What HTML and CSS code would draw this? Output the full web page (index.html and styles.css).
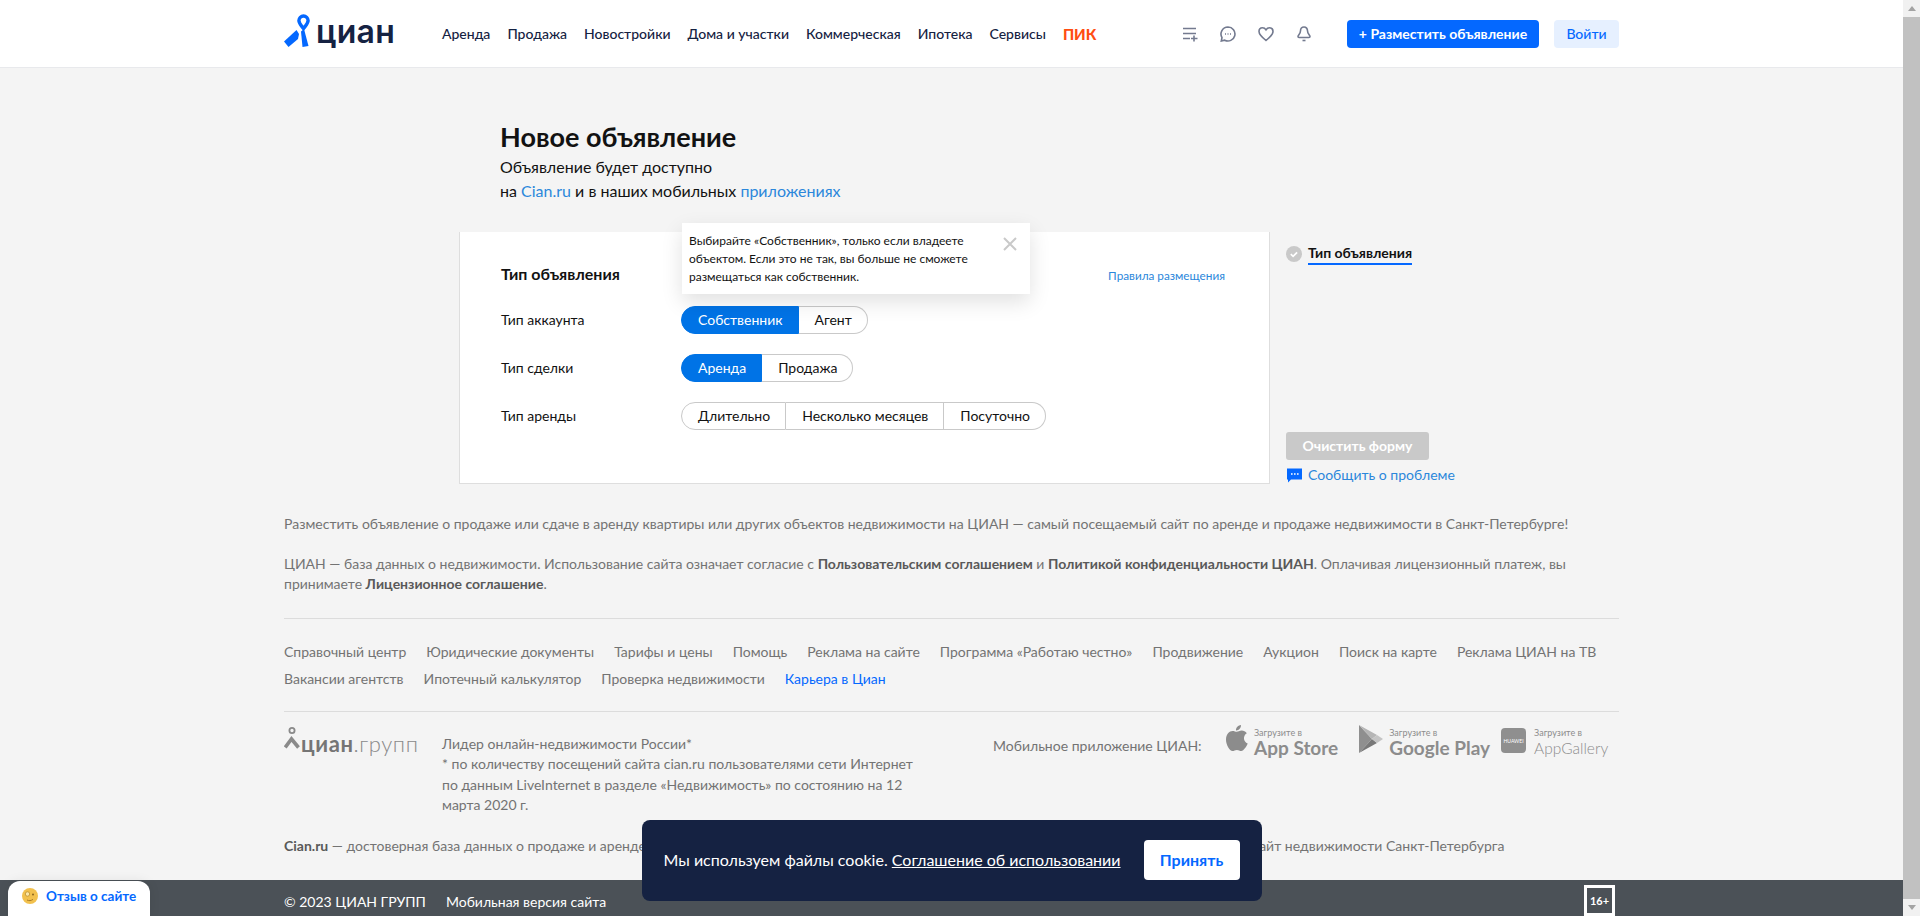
FILE: index.html
```html
<!DOCTYPE html>
<html lang="ru">
<head>
<meta charset="UTF-8">
<title>Новое объявление</title>
<link rel="stylesheet" href="styles.css">
</head>
<body>
<div class="page">
    <header class="header">
        <div class="header-in">
            <a class="logo">
                <svg width="26" height="36" viewBox="0 0 26 36">
                    <path d="M19.500 2a4.600 4.600 0 0 0-4.600 4.600c0 3 2.500 5 4.600 8 2.100-3 4.600-5 4.600-8A4.600 4.600 0 0 0 19.500 2z" fill="none" stroke="#0468ff" stroke-width="3.400"/>
                    <polygon points="0,27.500 12.500,16 15,20 14,25 4.500,33" fill="#0468ff"/>
                    <polygon points="17,17.500 20,15 24.500,32 18.500,33" fill="#0468ff"/>
                </svg>
                <span class="logo-text">циан</span>
            </a>
            <nav class="nav">
                <a>Аренда</a>
                <a>Продажа</a>
                <a>Новостройки</a>
                <a>Дома и участки</a>
                <a>Коммерческая</a>
                <a>Ипотека</a>
                <a>Сервисы</a>
                <a class="nav-pik">ПИК</a>
            </nav>
            <div class="header-icons">
                <svg width="16" height="16" viewBox="0 0 16 16" fill="none" stroke="#737a8f" stroke-width="1.600"><path d="M1 2.500h13M1 7.500h13M1 12.500h7M12 9.500v6M9 12.500h6.500"/></svg>
                <svg width="16" height="16" viewBox="0 0 16 16" fill="none"><path d="M8 1a7 7 0 1 1-3.300 13.200L1.300 15l.7-3.400A7 7 0 0 1 8 1z" stroke="#737a8f" stroke-width="1.600"/><path d="M5 8h1M7.500 8h1M10 8h1" stroke="#737a8f" stroke-width="1.400"/></svg>
                <svg width="16" height="16" viewBox="0 0 16 16" fill="none"><path d="M8 14.500C4 11.300 1 8.800 1 5.500 1 3.200 2.700 1.800 4.500 1.800c1.400 0 2.700.7 3.500 2 .8-1.300 2.100-2 3.500-2 1.800 0 3.500 1.400 3.500 3.700 0 3.300-3 5.800-7 9z" stroke="#737a8f" stroke-width="1.600"/></svg>
                <svg width="16" height="16" viewBox="0 0 16 16" fill="none" stroke="#737a8f" stroke-width="1.600"><path d="M8 1c-2.200 0-3.500 1.700-3.500 3.800 0 3.200-2.500 4.200-2.500 5.700 0 .6.400 1 1 1h10c.6 0 1-.4 1-1 0-1.500-2.500-2.500-2.500-5.700C11.500 2.700 10.200 1 8 1z"/><path d="M6.500 14.500h3"/></svg>
            </div>
            <a class="btn-add">+ Разместить объявление</a>
            <a class="btn-login">Войти</a>
        </div>
    </header>

    <main class="main">
        <div class="intro">
            <h1 class="intro-title">Новое объявление</h1>
            <p class="intro-text">Объявление будет доступно<br>на <a class="link">Cian.ru</a> и в наших мобильных <a class="link">приложениях</a></p>
        </div>

        <div class="form-wrap">
            <section class="card">
                <div class="card-head">
                    <h2 class="card-title">Тип объявления</h2>
                    <a class="rules">Правила размещения</a>
                </div>
                <div class="row">
                    <div class="row-label">Тип аккаунта</div>
                    <div class="switch">
                        <div class="hint">
                            <p>Выбирайте «Собственник», только если владеете объектом. Если это не так, вы больше не сможете размещаться как собственник.</p>
                            <svg class="hint-close" width="14" height="14" viewBox="0 0 14 14" fill="none" stroke="#c9c9c9" stroke-width="2"><path d="M1 1l12 12M13 1L1 13"/></svg>
                        </div>
                        <span class="switch-item active">Собственник</span>
                        <span class="switch-item">Агент</span>
                    </div>
                </div>
                <div class="row">
                    <div class="row-label">Тип сделки</div>
                    <div class="switch">
                        <span class="switch-item active">Аренда</span>
                        <span class="switch-item">Продажа</span>
                    </div>
                </div>
                <div class="row">
                    <div class="row-label">Тип аренды</div>
                    <div class="switch">
                        <span class="switch-item">Длительно</span>
                        <span class="switch-item">Несколько месяцев</span>
                        <span class="switch-item">Посуточно</span>
                    </div>
                </div>
            </section>

            <aside class="side">
                <div class="side-step">
                    <svg width="16" height="16" viewBox="0 0 16 16"><circle cx="8" cy="8" r="8" fill="#c9c9c9"/><path d="M4.800 8.200l2.300 2.200 4-4" fill="none" stroke="#fff" stroke-width="1.700"/></svg>
                    <span class="side-step-name">Тип объявления</span>
                </div>
                <a class="btn-clear">Очистить форму</a>
                <a class="report">
                    <svg width="16" height="16" viewBox="0 0 16 16"><path d="M1 1.500h15v11H5l-3 3v-3H1z" fill="#0468ff"/><path d="M5 7h1.600M8 7h1.600M11 7h1.600" stroke="#fff" stroke-width="1.600"/></svg>
                    <span>Сообщить о проблеме</span>
                </a>
            </aside>
        </div>

        <div class="seo">
            <p>Разместить объявление о продаже или сдаче в аренду квартиры или других объектов недвижимости на ЦИАН — самый посещаемый сайт по аренде и продаже недвижимости в Санкт-Петербурге!</p>
            <p>ЦИАН — база данных о недвижимости. Использование сайта означает согласие с <b>Пользовательским соглашением</b> и <b>Политикой конфиденциальности ЦИАН</b>. Оплачивая лицензионный платеж, вы принимаете <b>Лицензионное соглашение</b>.</p>
        </div>

        <div class="links">
            <a>Справочный центр</a>
            <a>Юридические документы</a>
            <a>Тарифы и цены</a>
            <a>Помощь</a>
            <a>Реклама на сайте</a>
            <a>Программа «Работаю честно»</a>
            <a>Продвижение</a>
            <a>Аукцион</a>
            <a>Поиск на карте</a>
            <a>Реклама ЦИАН на ТВ</a>
            <a>Вакансии агентств</a>
            <a>Ипотечный калькулятор</a>
            <a>Проверка недвижимости</a>
            <a class="links-blue">Карьера в Циан</a>
        </div>

        <div class="about">
            <div class="group-logo">
                <svg width="16" height="24" viewBox="0 0 16 24">
                    <circle cx="8" cy="4.500" r="2.600" fill="none" stroke="#8a8a8a" stroke-width="1.800"/>
                    <path d="M1.200 21.500 7.500 13 14.500 21.500" fill="none" stroke="#8a8a8a" stroke-width="3.600"/>
                </svg>
                <span class="group-name"><b>циан</b>.групп</span>
            </div>
            <div class="about-text">Лидер онлайн-недвижимости России*<br>* по количеству посещений сайта cian.ru пользователями сети Интернет по данным LiveInternet в разделе «Недвижимость» по состоянию на 12 марта 2020 г.</div>
            <div class="apps">
                <span class="apps-title">Мобильное приложение ЦИАН:</span>
                <a class="store store-apple">
                    <svg width="22" height="26" viewBox="0 0 22 26"><path d="M15 0c.2 2.800-2.300 5.600-5 5.400C9.700 2.700 12.400.200 15 0zM10.800 6.800c1.200 0 2.800-1.300 5-1.300 1.800 0 3.800 1 5 2.800-4.200 2.500-3.500 8.500.9 10.300-1.200 3-4 7.400-6.400 7.400-1.700 0-2.400-1.100-4.400-1.100s-2.800 1.100-4.400 1.100C3.600 26 0 19.700 0 14.800 0 9.300 3.400 6 6.500 6c1.800 0 3.200.8 4.300.8z" fill="#8c8c8c"/></svg>
                    <span class="store-text"><small>Загрузите в</small><b>App Store</b></span>
                </a>
                <a class="store store-play">
                    <svg width="24" height="28" viewBox="0 0 24 28"><path d="M0 0l13 14L0 28z" fill="#8f8f8f"/><path d="M0 0l18 10-5 4z" fill="#b5b5b5"/><path d="M0 28l18-10-5-4z" fill="#787878"/><path d="M18 10l6 4-6 4-5-4z" fill="#c4c4c4"/></svg>
                    <span class="store-text"><small>Загрузите в</small><b>Google Play</b></span>
                </a>
                <a class="store store-huawei">
                    <span class="huawei-icon">HUAWEI</span>
                    <span class="store-text"><small>Загрузите в</small><span class="gallery">AppGallery</span></span>
                </a>
            </div>
        </div>

        <p class="copy-text"><b>Cian.ru</b> — достоверная база данных о продаже и аренде жилой, городской и коммерческой недвижимости в Санкт-Петербурге. Самый посещаемый сайт недвижимости Санкт-Петербурга</p>
    </main>

    <footer class="footer">
        <div class="footer-in">
            <span>© 2023 ЦИАН ГРУПП</span>
            <a>Мобильная версия сайта</a>
            <span class="age">16+</span>
        </div>
    </footer>

    <div class="feedback">
        <svg width="16" height="18" viewBox="0 0 16 18"><circle cx="8" cy="9" r="8" fill="#f2c14e"/><circle cx="5.500" cy="7" r="2.200" fill="#fbe7a8" stroke="#b58a2a" stroke-width=".7"/><circle cx="11" cy="7.500" r="1" fill="#8a6420"/><path d="M5 13c2 1 4 .8 6-.6" fill="none" stroke="#a87a25" stroke-width="1"/></svg>
        <span>Отзыв о сайте</span>
    </div>

    <div class="cookie">
        <p>Мы используем файлы cookie. <a>Соглашение об использовании</a></p>
        <a class="cookie-btn">Принять</a>
    </div>
</div>

<div class="scrollbar">
    <div class="scroll-arrow"><i class="arrow-up"></i></div>
    <div class="scroll-thumb"></div>
    <div class="scroll-arrow"><i class="arrow-down"></i></div>
</div>
</body>
</html>
```

FILE: styles.css
```css
* {
    box-sizing: border-box;
}

html, body {
    margin: 0;
    height: 916px;
    overflow: hidden;
}

body {
    display: flex;
    font-family: Lato, "Noto Sans", sans-serif;
    font-size: 14px;
    color: #121212;
    background-color: #f4f4f4;
}

p, h1, h2 {
    margin: 0;
}

.page {
    flex: 1;
    position: relative;
    min-width: 0;
}

/* header */

.header {
    height: 68px;
    background-color: white;
    border-bottom: 1px solid #e8e9ec;
}

.header-in {
    width: 1335px;
    height: 67px;
    margin: 0 auto;
    display: flex;
    align-items: center;
}

.header-in > * {
    flex-shrink: 0;
}

.logo {
    width: 158px;
    height: 50px;
    display: flex;
    align-items: flex-end;
    align-self: flex-start;
    padding-top: 8px;
}

.logo-text {
    margin-left: 6px;
    font-family: Inter, sans-serif;
    font-size: 32px;
    line-height: 36px;
    letter-spacing: 0.3px;
    font-weight: 600;
    color: #152242;
}

.nav {
    display: flex;
    gap: 17px;
    line-height: 20px;
    white-space: nowrap;
    color: #152242;
    font-weight: 500;
}

.nav-pik {
    color: #ff4d12;
    font-size: 15px;
    font-weight: 900;
}

.header-icons {
    margin-left: auto;
    display: flex;
    gap: 22px;
}

.btn-add {
    margin-left: 35px;
    width: 192px;
    height: 28px;
    line-height: 28px;
    text-align: center;
    border-radius: 4px;
    background-color: #0468ff;
    color: white;
    font-weight: 700;
}

.btn-login {
    margin-left: 15px;
    width: 65px;
    height: 28px;
    line-height: 28px;
    text-align: center;
    border-radius: 4px;
    background-color: #e6f0ff;
    color: #0468ff;
    font-weight: 500;
}

/* form */

.main {
    width: 1335px;
    margin: 0 auto;
}

.intro {
    padding: 51px 0 29px 216px;
}

.intro-title {
    font-size: 27px;
    line-height: 36px;
    font-weight: 700;
}

.intro-text {
    font-size: 16px;
    line-height: 24px;
}

.link {
    color: #2b87db;
}

.form-wrap {
    display: flex;
    padding-left: 175px;
}

.card {
    width: 811px;
    padding: 29px 44px 53px 41px;
    background-color: white;
    border: 1px solid #dedede;
    border-top: none;
}

.card-head {
    display: flex;
    justify-content: space-between;
    align-items: center;
    height: 24px;
    margin-bottom: 21px;
}

.card-title {
    font-size: 16px;
    font-weight: 700;
}

.rules {
    font-size: 11.750px;
    color: #2b87db;
    padding-top: 5px;
}

.row {
    display: flex;
    align-items: center;
    height: 28px;
    margin-bottom: 20px;
}

.row:last-child {
    margin-bottom: 0;
}

.row-label {
    width: 180px;
    padding-bottom: 1px;
}

.switch {
    display: flex;
    position: relative;
}

.switch-item {
    height: 28px;
    line-height: 26px;
    padding: 0 15px 0 16px;
    border: 1px solid #c9c9c9;
    border-left: none;
}

.switch-item:first-of-type {
    border-left: 1px solid #c9c9c9;
    border-radius: 14px 0 0 14px;
}

.switch-item:last-child {
    border-radius: 0 14px 14px 0;
}

.switch-item.active {
    background-color: #0073e6;
    border-color: #0073e6;
    color: white;
}

.hint {
    position: absolute;
    left: 1px;
    bottom: 40px;
    width: 348px;
    height: 71px;
    display: flex;
    padding: 9px 7px 7px;
    background-color: white;
    box-shadow: 0 8px 20px rgba(0, 0, 0, 0.12);
    font-size: 12px;
    line-height: 18px;
}

.hint p {
    flex: 1;
    padding-right: 30px;
}

.hint-close {
    margin: 5px 6px 0 0;
    flex-shrink: 0;
}

/* side column */

.side {
    margin-left: 16px;
    width: 240px;
    display: flex;
    flex-direction: column;
    align-items: flex-start;
}

.side-step {
    margin-top: 11px;
    display: flex;
    align-items: center;
    gap: 6px;
}

.side-step-name {
    font-weight: 700;
    line-height: 20px;
    border-bottom: 2px solid #0468ff;
}

.btn-clear {
    margin-top: auto;
    width: 143px;
    height: 28px;
    line-height: 28px;
    text-align: center;
    border-radius: 3px;
    background-color: #c9c9c9;
    color: white;
    font-weight: 700;
}

.report {
    margin: 5px 0 -1px;
    display: flex;
    align-items: center;
    gap: 6px;
    line-height: 20px;
    color: #2b87db;
}

/* seo text and links */

.seo {
    margin-top: 30px;
    padding-bottom: 24px;
    line-height: 20px;
    color: #737373;
    border-bottom: 1px solid #dcdcdc;
}

.seo p + p {
    margin-top: 20px;
}

.seo b {
    color: #595959;
}

.links {
    display: flex;
    flex-wrap: wrap;
    column-gap: 20px;
    padding: 19px 0 19px;
    line-height: 27px;
    color: #737373;
    border-bottom: 1px solid #dcdcdc;
}

.links-blue {
    color: #0468ff;
}

.about {
    display: flex;
    padding-top: 22px;
    color: #737373;
}

.group-logo {
    width: 158px;
    flex-shrink: 0;
    display: flex;
    align-items: flex-start;
    gap: 1px;
    margin-top: -8px;
}

.group-name {
    font-size: 22px;
    line-height: 36px;
    font-weight: 300;
    letter-spacing: 0.6px;
    color: #8a8a8a;
}

.group-name b {
    font-weight: 700;
    color: #757575;
}

.about-text {
    width: 480px;
    flex-shrink: 0;
    line-height: 20.300px;
}

.apps {
    margin-left: 71px;
    flex-shrink: 0;
    display: flex;
    align-items: flex-start;
    margin-top: -9px;
}

.apps-title {
    width: 233px;
    padding-top: 11px;
    line-height: 20px;
}

.store {
    display: flex;
    align-items: flex-start;
    height: 28px;
    color: #8c8c8c;
}

.store-text {
    display: flex;
    flex-direction: column;
    padding: 3px 0 0 8px;
}

.store-text small {
    font-size: 9px;
    line-height: 10px;
}

.store-text b {
    font-size: 19px;
    line-height: 20px;
    font-weight: 700;
    white-space: nowrap;
}

.store-apple {
    margin-right: 21px;
}

.store-apple .store-text,
.store-play .store-text {
    padding-left: 6px;
}

.store-play {
    margin-right: 11px;
}

.gallery {
    font-size: 15.500px;
    line-height: 20px;
    font-weight: 300;
}

.huawei-icon {
    width: 25px;
    height: 25px;
    margin-top: 3px;
    border-radius: 4px;
    background-color: #8f8f8f;
    color: white;
    font-size: 5px;
    line-height: 26px;
    text-align: center;
}

.copy-text {
    margin-top: 21px;
    line-height: 20px;
    color: #737373;
}

.copy-text b {
    color: #595959;
}

/* footer */

.footer {
    position: absolute;
    left: 0;
    right: 0;
    top: 880px;
    height: 36px;
    background-color: #4b5157;
    color: white;
}

.footer-in {
    width: 1335px;
    height: 36px;
    margin: 0 auto;
    display: flex;
    gap: 20px;
    align-items: center;
    padding-top: 6px;
}

.age {
    margin: -1px 4px 0 auto;
    width: 31px;
    height: 31px;
    border: 3px solid white;
    font-size: 11px;
    font-weight: 700;
    line-height: 25px;
    text-align: center;
}

/* things lying over the page */

.feedback {
    position: absolute;
    left: 8px;
    bottom: 0;
    width: 142px;
    height: 35px;
    display: flex;
    gap: 8px;
    padding: 6px 0 0 14px;
    background-color: white;
    border-radius: 12px 12px 0 0;
    box-shadow: 0 0 12px rgba(0, 0, 0, 0.08);
    color: #0468ff;
    font-size: 13.500px;
    font-weight: 700;
    line-height: 18px;
}

.cookie {
    position: absolute;
    left: 50%;
    top: 820px;
    width: 620px;
    height: 81px;
    margin-left: -310px;
    display: flex;
    justify-content: space-between;
    align-items: center;
    padding: 0 22px 2px;
    background-color: #152242;
    border-radius: 8px;
    color: white;
    font-size: 16px;
}

.cookie a {
    text-decoration: underline;
}

.cookie .cookie-btn {
    width: 96px;
    height: 40px;
    line-height: 40px;
    text-align: center;
    background-color: white;
    border-radius: 4px;
    color: #0468ff;
    font-size: 16px;
    font-weight: 700;
    text-decoration: none;
}

/* scrollbar */

.scrollbar {
    width: 17px;
    display: flex;
    flex-direction: column;
    background-color: #f1f1f1;
}

.scroll-arrow {
    height: 17px;
    display: flex;
    justify-content: center;
    align-items: center;
}

.scroll-thumb {
    flex: 1;
    background-color: #c1c1c1;
}

.arrow-up {
    border: 4px solid transparent;
    border-bottom: 5px solid #a3a3a3;
    border-top: none;
}

.arrow-down {
    border: 4px solid transparent;
    border-top: 5px solid #a3a3a3;
    border-bottom: none;
}
```
